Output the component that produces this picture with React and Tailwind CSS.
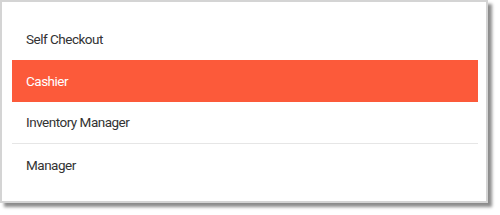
const items = ["Self Checkout", "Cashier", "Inventory Manager", "Manager"];

export default function App() {
  const selected = "Cashier";

  return (
    <div className="h-[215px] w-[500px] bg-white" style={{ fontFamily: "Roboto, 'Liberation Sans', sans-serif" }}>
      <div className="h-[203px] w-[488px] border-2 border-[#d4d4d4] bg-white pl-[10px] pr-[8px] pt-[16px] shadow-[4px_4px_3px_rgba(0,0,0,0.45)]">
        <ul>
          {items.map((item, i) => {
            const active = item === selected;
            return (
              <li
                key={item}
                className={
                  "flex h-[42px] items-center px-[14px] text-[13.5px] tracking-[-0.5px] " +
                  (active ? "bg-[#fc5a3a] text-white" : "text-[#333333]") +
                  (i === 2 ? " border-b border-[#e6e6e6]" : "")
                }
              >
                {item}
              </li>
            );
          })}
        </ul>
      </div>
    </div>
  );
}
